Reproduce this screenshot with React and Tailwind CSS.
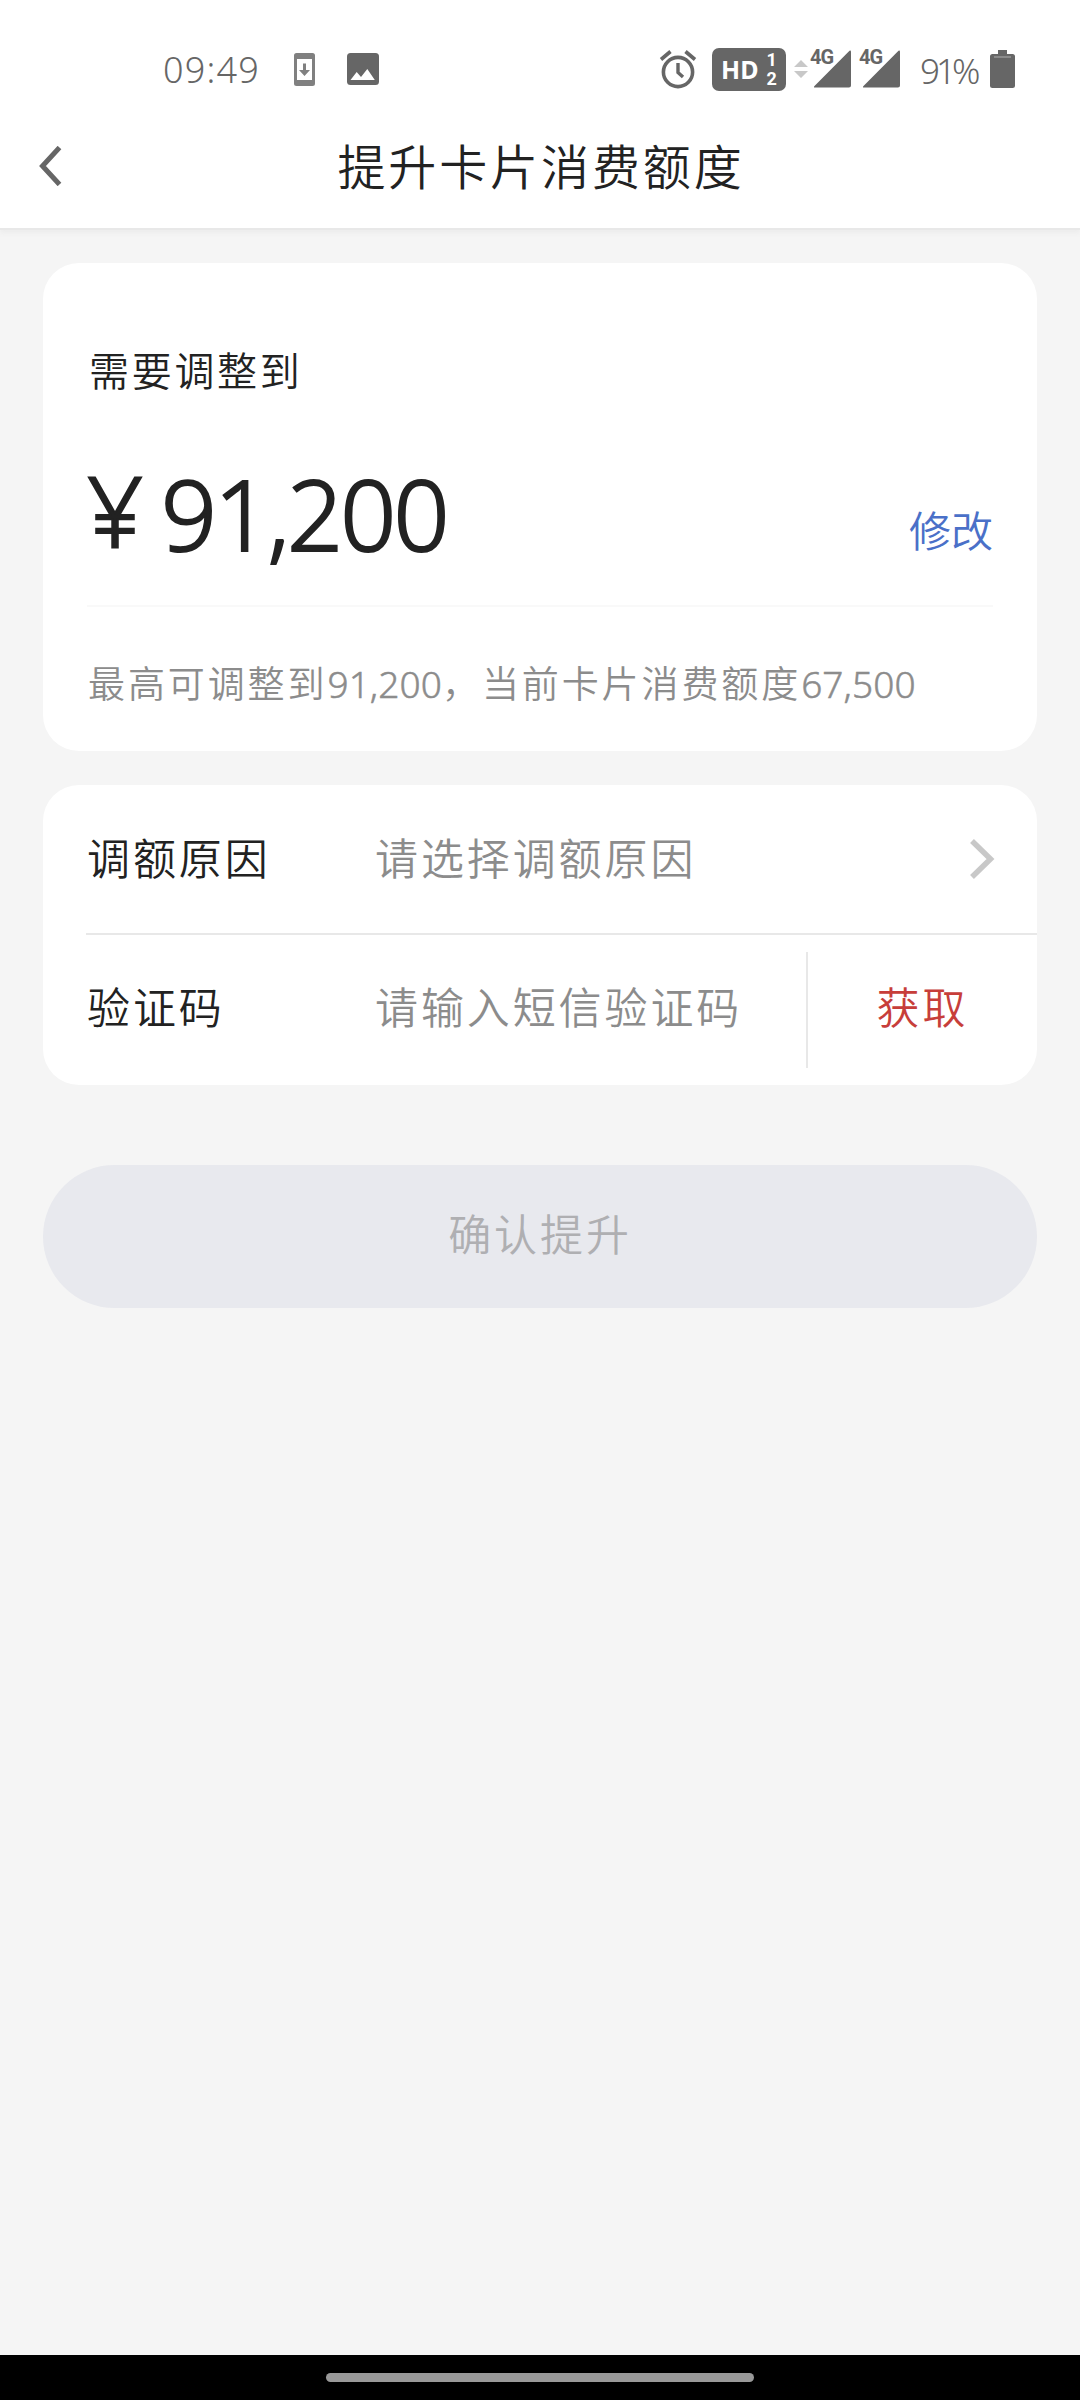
import { useState } from 'react';

function AlarmIcon() {
  return (
    <svg width="38" height="40" viewBox="0 0 38 40" fill="none" stroke="#666666" strokeWidth="3.6">
      <circle cx="19" cy="23" r="14.6" />
      <path d="M19 14v9.5l5 4.5" strokeWidth="3.4" />
      <path d="M2 10.5l9.5-8M36 10.5l-9.5-8" />
    </svg>
  );
}

function SignalIcon() {
  return (
    <div className="relative h-[38px] w-[40px]">
      <svg className="absolute inset-0" width="40" height="38" viewBox="0 0 40 38" fill="#666666">
        <path d="M37.5 .8Q39 0 39 2V35.500Q39 37.500 37 37.500H3Q1 37.500 2.500 36Z" />
      </svg>
      <span className="absolute left-[-2px] top-[-1px] font-['Roboto',sans-serif] text-[20px] font-bold leading-[16px] tracking-[-1px] text-[#666666] [-webkit-text-stroke:3px_white] [paint-order:stroke_fill]">4G</span>
    </div>
  );
}

function StatusBar() {
  return (
    <div className="flex h-[106px] items-center pt-[32px] pr-[65px] pl-[163px] font-['Noto_Sans',sans-serif] text-[#666666]">
      <span className="w-[96px] pt-[2px] text-[36px] leading-none font-light tracking-[1.200px]">09:49</span>
      <svg className="ml-[35px]" width="21" height="33" viewBox="0 0 21 33">
        <path fill="#808080" fillRule="evenodd" d="M2.500 0h16A2.500 2.500 0 0 1 21 2.500v28a2.500 2.500 0 0 1-2.500 2.500h-16A2.500 2.500 0 0 1 0 30.500v-28A2.500 2.500 0 0 1 2.500 0ZM3 6v21h15V6Z" />
        <path fill="#808080" d="M9 10.500h3V17h4l-5.500 6L5 17h4Z" />
      </svg>
      <svg className="ml-[32px]" width="32" height="32" viewBox="0 0 32 32">
        <rect width="32" height="32" rx="3.500" fill="#666666" />
        <path d="M3.500 27l6.200-8 4.300 5 6.300-8 7.500 11Z" fill="#ffffff" />
      </svg>

      <div className="ml-auto flex items-center">
        <AlarmIcon />
        <div className="ml-[15px] flex h-[43px] w-[74px] items-center justify-center gap-[8px] rounded-[7px] bg-[#666666] text-white">
          <span className="text-[25px] leading-none font-bold">HD</span>
          <span className="flex flex-col font-['Roboto',sans-serif] text-[18px] leading-[19px] font-bold">
            <span>1</span>
            <span>2</span>
          </span>
        </div>
        <svg className="ml-[8px]" width="14" height="18" viewBox="0 0 14 18" fill="#c8c8c8">
          <path d="M0 7l7-7 7 7ZM0 11l7 7 7-7Z" />
        </svg>
        <div className="ml-[4px] flex gap-[9px]">
          <SignalIcon />
          <SignalIcon />
        </div>
        <span className="ml-[19px] w-[60px] pt-[2px] text-[35px] leading-none font-light tracking-[-4px]">91%</span>
        <svg className="ml-[10px]" width="25" height="38" viewBox="0 0 25 38" fill="#666666">
          <path d="M8 0h9v4h5.500A2.500 2.500 0 0 1 25 6.500v29a2.500 2.500 0 0 1-2.500 2.500h-20A2.500 2.500 0 0 1 0 35.500v-29A2.500 2.500 0 0 1 2.500 4H8Z" />
          <path d="M4 7h17" stroke="#999999" strokeWidth="1.500" />
        </svg>
      </div>
    </div>
  );
}

export default function App() {
  const [code, setCode] = useState('');

  return (
    <div className="flex h-[2400px] w-[1080px] flex-col bg-[#f5f5f5] font-['Noto_Sans','Noto_Sans_CJK_SC',sans-serif] font-[350] text-[#222222]">
      {/* Header */}
      <header className="h-[228px] bg-white shadow-[0_2px_0_#e8e8e8,0_5px_5px_#ececec]">
        <StatusBar />
        <div className="grid h-[120px] grid-cols-[100px_1fr_100px] items-center">
          <button className="pl-[38px]">
            <svg width="25" height="40" viewBox="0 0 25 40" fill="none" stroke="#666666" strokeWidth="5">
              <path d="M21.500 1.500L4.500 20l17 18.500" />
            </svg>
          </button>
          <h1 className="pt-[2px] pl-[2px] text-center text-[48px] leading-[60px] tracking-[2.900px]">提升卡片消费额度</h1>
        </div>
      </header>

      <main className="flex-1 px-[43px] pt-[35px]">
        {/* Amount */}
        <section className="h-[488px] rounded-[36px] bg-white px-[44px] pt-[83px]">
          <p className="pl-[2px] text-[40px] leading-[50px] tracking-[2.700px]">需要调整到</p>
          <div className="flex h-[211px] justify-between border-b-2 border-[#f9f9f9]">
            <div className="flex pt-[67px] text-[98px] leading-[100px] [-webkit-text-stroke:2px_#222222]">
              <span className="mt-[-4px] w-[74px]">¥</span>
              <span className="tracking-[-2.700px]">91,200</span>
            </div>
            <button className="mt-[110px] h-[50px] text-[42px] leading-[50px] text-[#4a70c8]">修改</button>
          </div>
          <p className="pt-[52px] pl-[1px] text-[37px] leading-[50px] tracking-[2.900px] text-[#8c8c8c]">
            最高可调整到<span className="tracking-[0.100px] [-webkit-text-stroke:0.500px_#8c8c8c]">91,200</span>，当前卡片消费额度<span className="tracking-[0.100px] [-webkit-text-stroke:0.500px_#8c8c8c]">67,500</span>
          </p>
        </section>

        {/* Form */}
        <section className="mt-[34px] h-[300px] rounded-[36px] bg-white pl-[43px] text-[43px] tracking-[2.900px]">
          <div className="flex h-[150px] items-center border-b-2 border-[#e8e8e8] pr-[41px] pl-[1px]">
            <span className="w-[288px]">调额原因</span>
            <span className="text-[#8c8c8c]">请选择调额原因</span>
            <svg className="ml-auto" width="27" height="40" viewBox="0 0 27 40" fill="none" stroke="#c8c8c8" strokeWidth="5.500">
              <path d="M3 2l18.500 18L3 38" />
            </svg>
          </div>
          <div className="flex h-[150px] items-center pl-[1px]">
            <span className="w-[288px] pb-[3px]">验证码</span>
            <input
              className="w-[431px] pb-[3px] tracking-[2.900px] outline-none placeholder:text-[#8c8c8c]"
              placeholder="请输入短信验证码"
              value={code}
              onChange={(e) => setCode(e.target.value)}
            />
            <button className="h-[116px] flex-1 border-l-2 border-[#e8e8e8] pb-[3px] text-[#c73e3a]">获取</button>
          </div>
        </section>

        <button className="mt-[80px] h-[143px] w-full rounded-full bg-[#e8e9ee] pb-[2px] text-[43px] tracking-[2.900px] text-[#afafb2]">
          确认提升
        </button>
      </main>

      {/* Gesture bar */}
      <footer className="flex h-[45px] justify-center bg-black pt-[18px]">
        <div className="h-[9px] w-[428px] rounded-full bg-[#999999]" />
      </footer>
    </div>
  );
}
